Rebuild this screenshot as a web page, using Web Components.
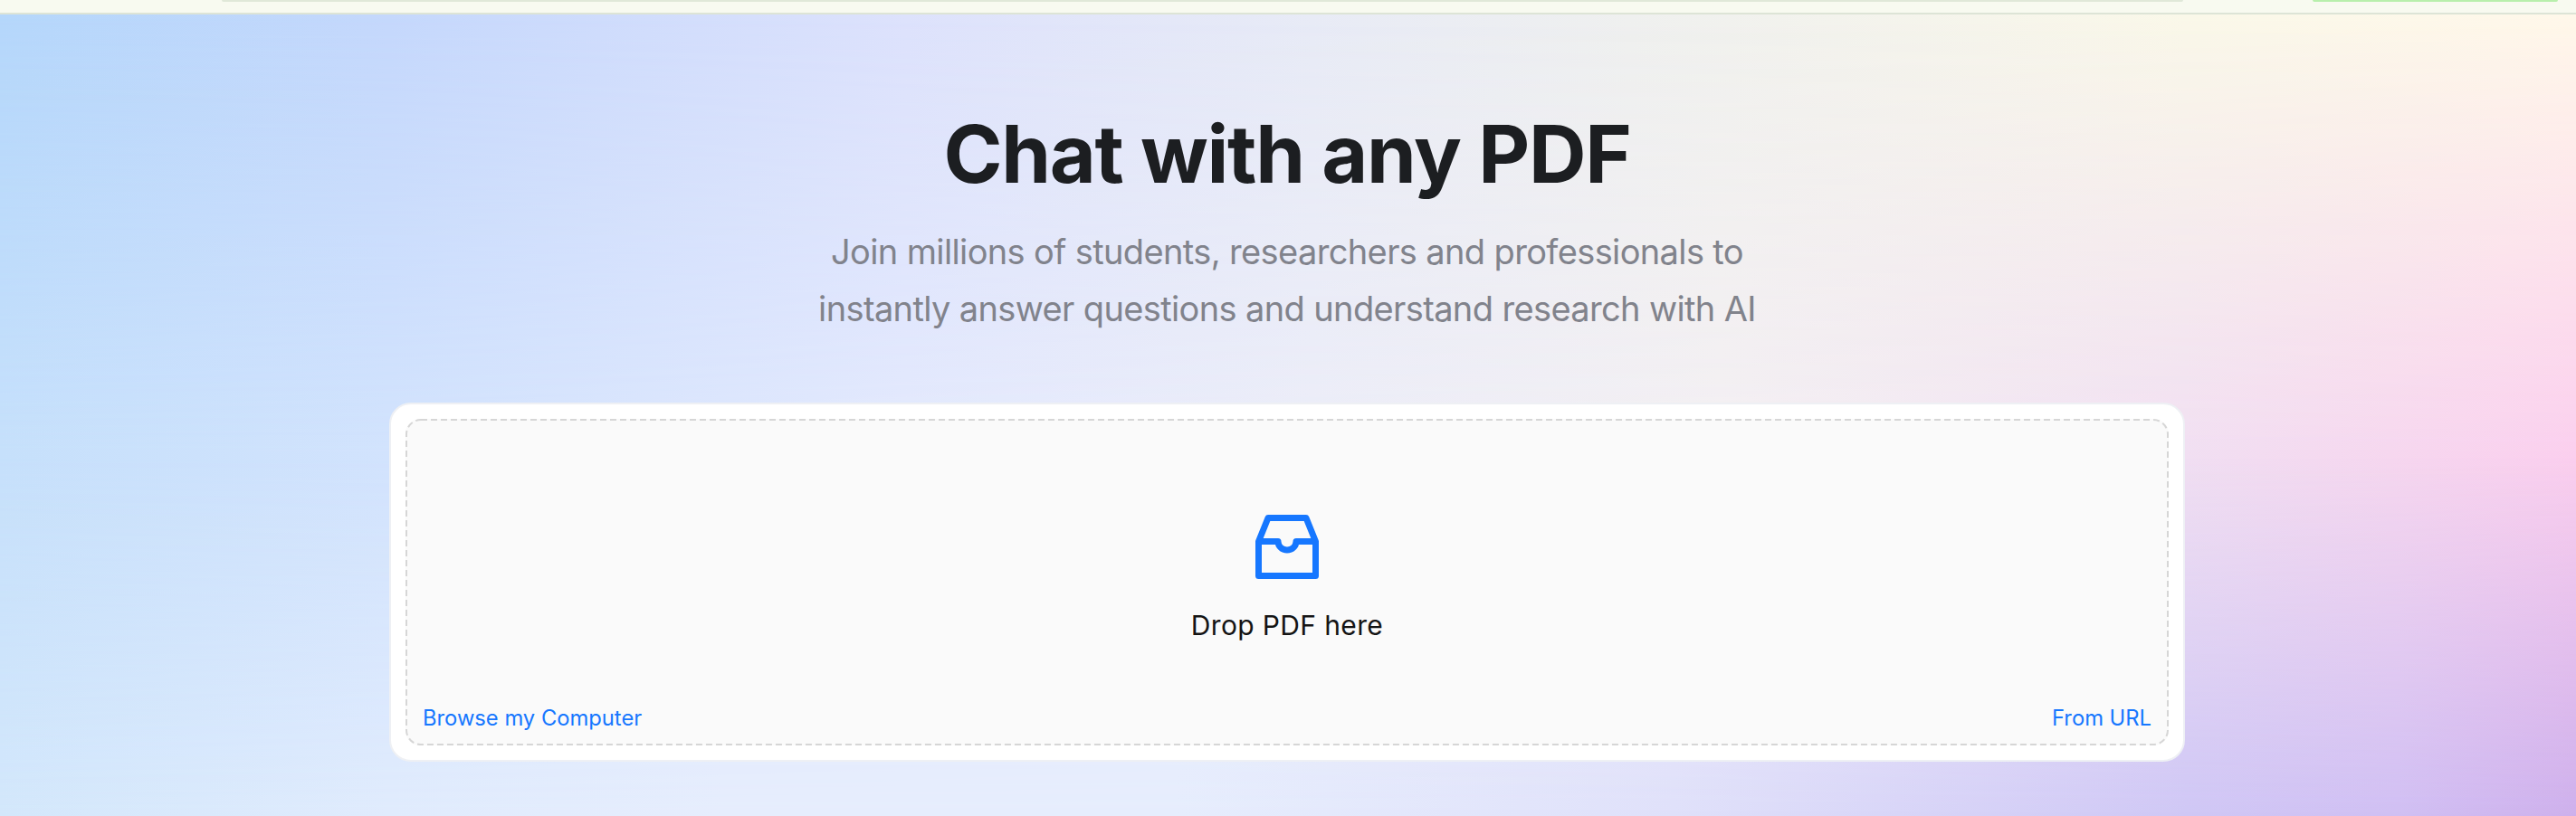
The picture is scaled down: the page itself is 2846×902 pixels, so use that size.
<!DOCTYPE html>
<html lang="en"><head><meta charset="utf-8"><title>Chat with any PDF</title>
<style>
html,body{margin:0;padding:0;height:100%}
body{width:2846px;height:902px;overflow:hidden;font-family:Inter,"Liberation Sans",sans-serif}
</style></head><body>
<template id="t-app">
<style>
:host{display:flex;flex-direction:column;width:2846px;height:902px;overflow:hidden}
.page{flex:1;position:relative;display:flex;flex-direction:column;align-items:center;padding-top:101px;isolation:isolate;
 background:linear-gradient(to right,#b5d7fb 0,#c5d8fc 430px,#dde2fc 1000px,#e8ebf6 1450px,#eff0ef 1800px,#faf8e9 2414px,#fff8ea 2846px)}
.page::before,.page::after{content:"";position:absolute;inset:0;z-index:-1}
.page::before{background:linear-gradient(to right,#c6e0fb 0,#d2e3fd 430px,#e3e9fd 1000px,#ecedf8 1450px,#f3eff3 1900px,#f1dff2 2414px,#f6d7ef 2640px,#fbcfee 2846px);
 -webkit-mask-image:linear-gradient(to bottom,transparent 0,#000 55%);mask-image:linear-gradient(to bottom,transparent 0,#000 55%)}
.page::after{background:linear-gradient(to right,#d3e7fb 0,#e0ebfd 430px,#e6edfd 800px,#e6edfd 1300px,#dfe0fa 1850px,#cfc7f5 2414px,#d0bff3 2650px,#ceb0ec 2846px);
 -webkit-mask-image:linear-gradient(to bottom,transparent 55%,#000 100%);mask-image:linear-gradient(to bottom,transparent 55%,#000 100%)}
</style>
<top-strip></top-strip>
<div class="page"><slot></slot></div>
</template>
<template id="t-strip">
<style>
:host{display:block;box-sizing:border-box;height:16px;flex:none;background:#f8faf0;border-bottom:2px solid #dde4d6}
.row{display:flex;justify-content:space-between;padding:0 20px 0 245px}
.a{width:2167px;height:2px;background:#e0e8d8;border-radius:0 0 6px 6px}
.b{width:271px;height:2px;background:#b8efac;border-radius:0 0 6px 6px}
</style>
<div class="row"><div class="a"></div><div class="b"></div></div>
</template>
<template id="t-hero">
<style>
:host{display:block;text-align:center;margin-right:2px}
h1{margin:0;font:650 88px/106px Inter,"Liberation Sans",sans-serif;color:#1c1e21;letter-spacing:-1.3px}
p{margin:24px 0 0;font:400 38px/63px Inter,"Liberation Sans",sans-serif;color:#81838c;letter-spacing:-.63px}
</style>
<h1><slot name="title"></slot></h1>
<p><slot name="sub"></slot></p>
</template>
<template id="t-drop">
<style>
:host{display:block;box-sizing:border-box;width:1984px;height:397px;margin:72px 2px 0 0;padding:16px;background:#fff;border:2px solid #eef0f4;border-radius:24px}
.zone{position:relative;box-sizing:border-box;height:100%;border-radius:16px;background:#fafafa;display:flex;flex-direction:column;align-items:center;padding:0 19px}
.dash{position:absolute;inset:0;width:100%;height:100%;margin:0;fill:none;stroke:#d6d6d6;stroke-width:2;stroke-dasharray:7 4}
.dash rect{x:1px;y:1px;width:calc(100% - 2px);height:calc(100% - 2px);rx:16px;ry:16px}
.icon{display:block;margin-top:106px;width:70px;height:71px}
.label{margin-top:29px;font:400 30px/44px Inter,"Liberation Sans",sans-serif;color:#141414;letter-spacing:.35px}
.links{margin-top:auto;margin-bottom:13px;width:100%;display:flex;justify-content:space-between}
</style>
<div class="zone">
<svg class="dash"><rect></rect></svg>
<svg class="icon" viewBox="0 0 70 71" fill="none" stroke="#1677ff" stroke-width="7" stroke-linejoin="round"><path d="M3.500 29.500 L14 3.500 H56 L66.500 29.500 V67.500 H3.500 Z"/><path d="M3.500 29.500 H25 A10 9.500 0 0 0 45 29.500 H66.500"/></svg>
<div class="label"><slot name="label"></slot></div>
<div class="links"><slot name="links"></slot></div>
</div>
</template>
<template id="t-link">
<style>
:host{display:inline-block;font:400 23.750px/34px Inter,"Liberation Sans",sans-serif;color:#1677ff;cursor:pointer}
</style><slot></slot>
</template>
<pdf-app>
<pdf-hero><span slot="title">Chat with any PDF</span><span slot="sub">Join millions of students, researchers and professionals to<br>instantly answer questions and understand research with AI</span></pdf-hero>
<pdf-drop><span slot="label">Drop PDF here</span><pdf-link slot="links">Browse my Computer</pdf-link><pdf-link slot="links">From URL</pdf-link></pdf-drop>
</pdf-app>
<script>
for(const [n,t] of [['pdf-app','t-app'],['top-strip','t-strip'],['pdf-hero','t-hero'],['pdf-drop','t-drop'],['pdf-link','t-link']]){
customElements.define(n,class extends HTMLElement{constructor(){super();this.attachShadow({mode:'open'}).appendChild(document.getElementById(t).content.cloneNode(true));}});
}
</script>
</body></html>
